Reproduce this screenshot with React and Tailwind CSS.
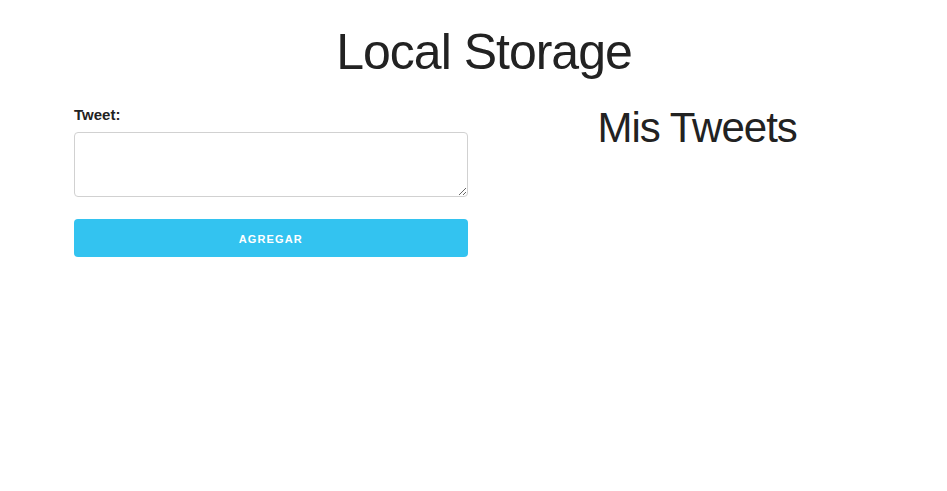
import React from 'react';

const App = () => {
  return (
    <div className="min-h-screen bg-white font-['Liberation_Sans',Arial,sans-serif] text-[#222]">
      <div className="ml-[74px] w-[820px] pt-[22px]">
        <h1 className="text-center text-[50px] leading-[60px] tracking-[-1px] font-light mb-[20px]">Local Storage</h1>

        <div className="flex gap-[32.8px]">
          {/* form */}
          <div className="w-[393.6px] pt-[1px]">
            <label className="block text-[15px] leading-[24px] font-semibold mb-[5px]">Tweet:</label>
            <textarea className="block w-full h-[65px] min-h-[65px] px-[10px] py-[6px] border border-[#D1D1D1] rounded-[4px] bg-white mb-[22px]" />
            <button className="block w-full h-[38px] pt-[2px] rounded-[4px] bg-[#33C3F0] text-white text-[11px] font-semibold tracking-[1.1px] uppercase">
              Agregar
            </button>
          </div>

          {/* lista */}
          <div className="w-[393.6px]">
            <h2 className="text-center text-[42px] leading-[52px] tracking-[-1px] font-light">Mis Tweets</h2>
          </div>
        </div>
      </div>
    </div>
  );
};

export default App;
